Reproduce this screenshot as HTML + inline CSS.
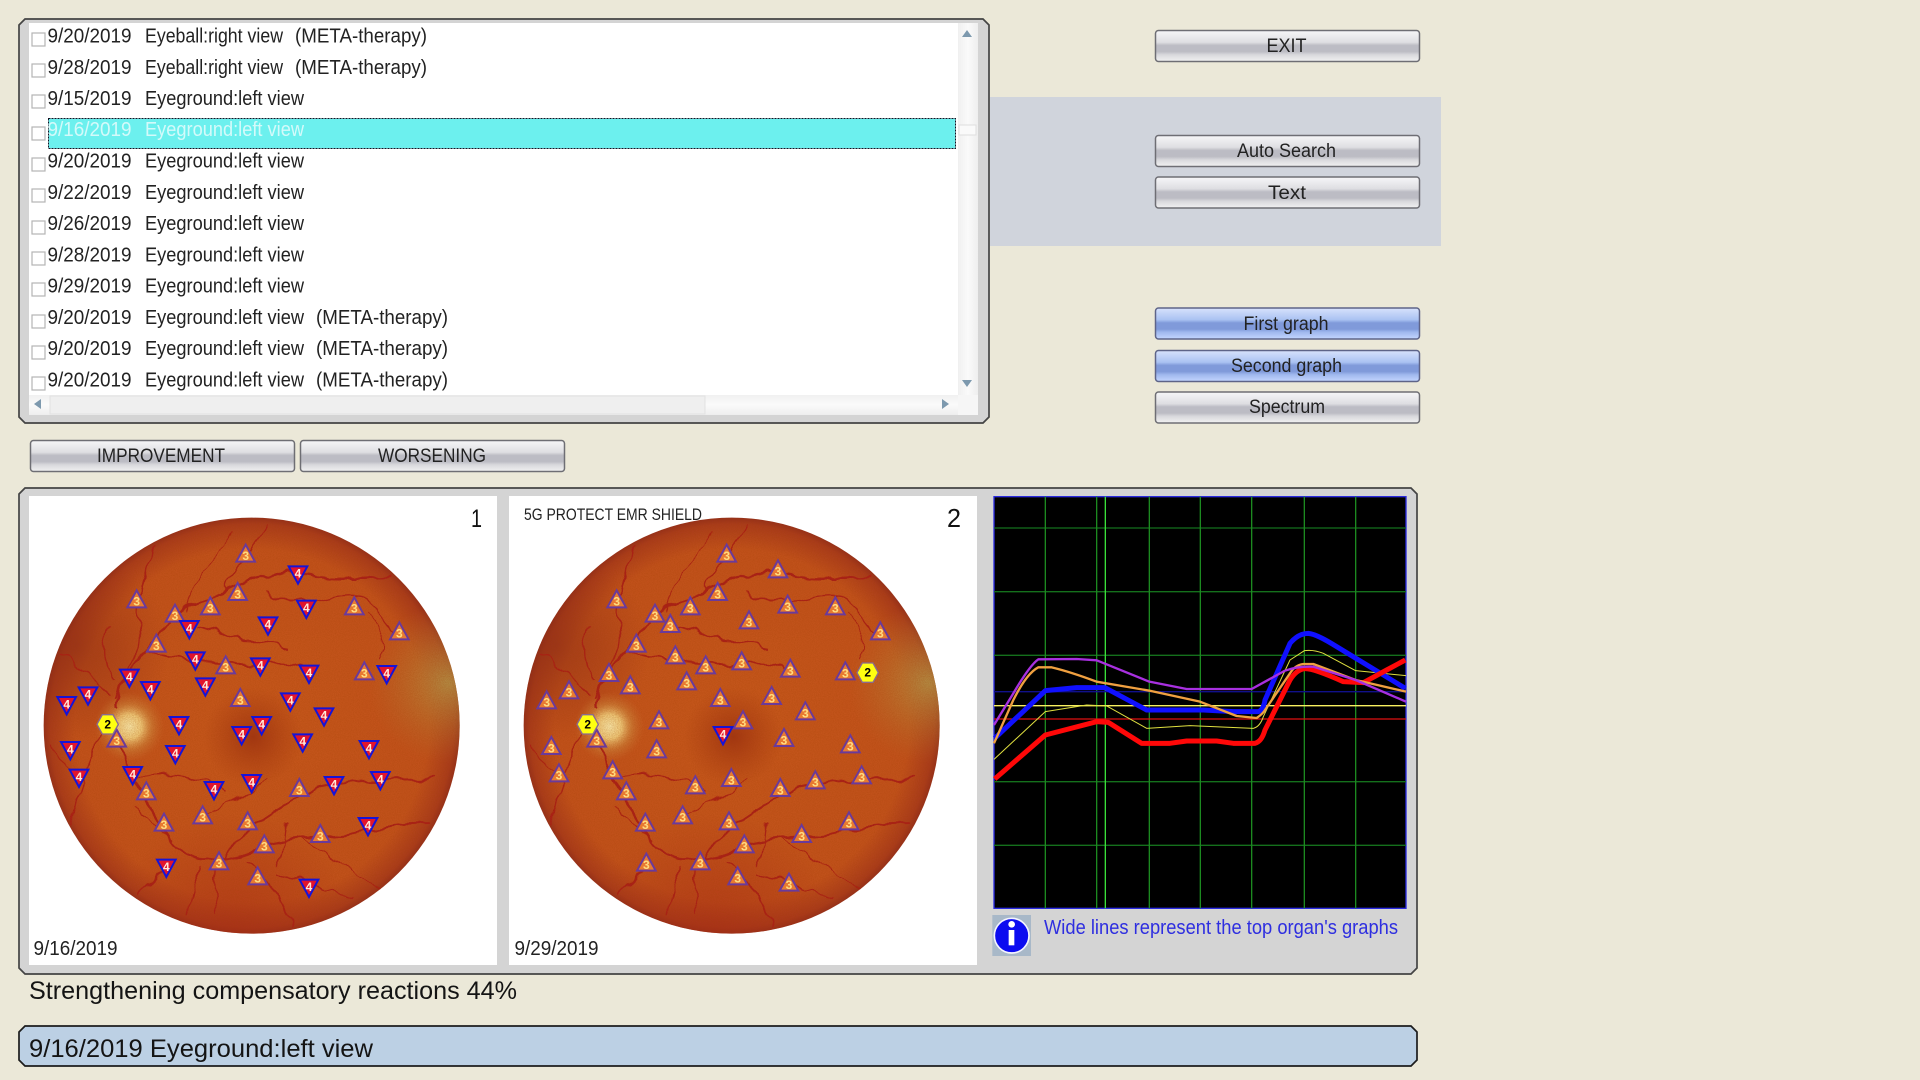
<!DOCTYPE html>
<html><head><meta charset="utf-8"><title>Eyeground view</title>
<style>
html,body{margin:0;padding:0;background:#ebe8d8;width:1920px;height:1080px;overflow:hidden}
svg{display:block;position:absolute;left:0;top:0}
text{font-family:"Liberation Sans",sans-serif;fill:#222}
.r{font-size:20px}
.b{font-size:19px;fill:#1c1c24}
.m text{font-weight:bold;font-size:36px;text-anchor:middle;dominant-baseline:central}
.u text{fill:#ffdc80}.d text{fill:#ffe8d8}
.h text{fill:#000}
</style></head><body>
<svg width="1920" height="1080" viewBox="0 0 1920 1080" xmlns="http://www.w3.org/2000/svg">
<defs>
<linearGradient id="gb" x1="0" y1="0" x2="0" y2="1"><stop offset="0" stop-color="#f6f6f8"/><stop offset=".38" stop-color="#dedee2"/><stop offset=".48" stop-color="#bcbcc4"/><stop offset=".68" stop-color="#bcbcc4"/><stop offset=".78" stop-color="#d8d8dc"/><stop offset="1" stop-color="#f2f2f2"/></linearGradient>
<linearGradient id="gl" x1="0" y1="0" x2="0" y2="1"><stop offset="0" stop-color="#d8e2fc"/><stop offset=".38" stop-color="#aac2f2"/><stop offset=".48" stop-color="#809ada"/><stop offset=".68" stop-color="#809ada"/><stop offset=".78" stop-color="#a0b8ee"/><stop offset="1" stop-color="#c4d6ff"/></linearGradient>
<linearGradient id="sv" x1="0" y1="0" x2="1" y2="0"><stop offset="0" stop-color="#f0f0f0"/><stop offset=".5" stop-color="#fafafa"/><stop offset="1" stop-color="#eeeeee"/></linearGradient>
<linearGradient id="sh" x1="0" y1="0" x2="0" y2="1"><stop offset="0" stop-color="#f0f0f0"/><stop offset=".5" stop-color="#fafafa"/><stop offset="1" stop-color="#eeeeee"/></linearGradient>
<radialGradient id="f0" cx=".5" cy=".5" r=".5"><stop offset="0" stop-color="#c6581c"/><stop offset=".85" stop-color="#c2521c"/><stop offset=".97" stop-color="#aa3c1c"/><stop offset="1" stop-color="#96301c"/></radialGradient>
<radialGradient id="f1" gradientUnits="userSpaceOnUse" cx="1345" cy="610" r="240"><stop offset="0" stop-color="#b49448" stop-opacity=".9"/><stop offset=".5" stop-color="#b88238" stop-opacity=".45"/><stop offset="1" stop-color="#b87030" stop-opacity="0"/></radialGradient>
<radialGradient id="f2" gradientUnits="userSpaceOnUse" cx="388" cy="740" r="105"><stop offset="0" stop-color="#f8e8a8"/><stop offset=".35" stop-color="#eec878"/><stop offset=".65" stop-color="#d08a40" stop-opacity=".6"/><stop offset="1" stop-color="#c87030" stop-opacity="0"/></radialGradient>
<radialGradient id="f3" gradientUnits="userSpaceOnUse" cx="760" cy="770" r="150"><stop offset="0" stop-color="#962a10" stop-opacity=".75"/><stop offset="1" stop-color="#a03410" stop-opacity="0"/></radialGradient>
<radialGradient id="f4" gradientUnits="userSpaceOnUse" cx="230" cy="500" r="280"><stop offset="0" stop-color="#8a2a18" stop-opacity=".55"/><stop offset="1" stop-color="#8a2a18" stop-opacity="0"/></radialGradient>
<radialGradient id="f5" gradientUnits="userSpaceOnUse" cx="700" cy="1360" r="360"><stop offset="0" stop-color="#a82c18" stop-opacity=".6"/><stop offset="1" stop-color="#a82c18" stop-opacity="0"/></radialGradient>
<filter id="n" x="0" y="0" width="100%" height="100%"><feTurbulence type="fractalNoise" baseFrequency=".35" numOctaves="2" seed="4"/><feColorMatrix values="0 0 0 0 .35  0 0 0 0 .05  0 0 0 0 0  .9 0 0 0 -.25"/></filter>
<filter id="w" x="-5%" y="-5%" width="110%" height="110%"><feTurbulence type="fractalNoise" baseFrequency=".018" numOctaves="2" seed="7" result="t"/><feDisplacementMap in="SourceGraphic" in2="t" scale="34" xChannelSelector="R" yChannelSelector="G"/></filter>
<clipPath id="cc"><circle cx="755" cy="737" r="624"/></clipPath>
<g id="fundus">
<circle cx="755" cy="737" r="624" fill="url(#f0)"/>
<g clip-path="url(#cc)">
<rect x="130" y="110" width="1260" height="1260" fill="url(#f1)"/>
<rect x="130" y="110" width="1260" height="1260" fill="url(#f4)"/>
<rect x="130" y="110" width="1260" height="1260" fill="url(#f5)"/>
<rect x="130" y="110" width="1260" height="1260" fill="url(#f3)"/>
<rect x="130" y="110" width="1260" height="1260" fill="url(#f2)"/>
<rect x="130" y="110" width="1260" height="1260" filter="url(#n)" opacity=".6"/>
<g fill="none" stroke="#a82212" stroke-linecap="round" filter="url(#w)">
<path stroke-width="7" d="M350 690C345 640 370 590 440 510S500 430 540 395S620 365 700 325S800 285 860 280S930 295 1020 295S1100 295 1170 290"/>
<path stroke-width="7" d="M360 790C380 880 430 950 500 1060S620 1140 680 1135S800 1080 950 1075S1100 1030 1290 1030"/>
<path stroke-width="6" d="M680 1135C720 1050 820 1000 900 950S1060 905 1300 895"/>
<path stroke-width="5" d="M470 200C430 270 415 320 415 400S430 500 380 570L345 650"/>
<path stroke-width="5" d="M590 440C660 450 700 470 720 480S800 470 860 500"/>
<path stroke-width="5" d="M445 520C560 540 650 560 800 550S900 590 930 590"/>
<path stroke-width="4" d="M800 330C810 370 830 380 1000 350S1100 410 1200 470"/>
<path stroke-width="5" d="M500 1160C470 1190 440 1220 420 1240"/>
<path stroke-width="4" d="M600 1160C580 1220 570 1260 560 1310"/>
<path stroke-width="4" d="M650 1150C640 1200 650 1240 650 1290"/>
<path stroke-width="5" d="M740 1150C790 1180 840 1250 880 1340"/>
<path stroke-width="4" d="M830 1190C900 1200 970 1220 1060 1250"/>
<path stroke-width="4" d="M330 640C290 600 240 570 180 520"/>
<path stroke-width="4" d="M300 760C270 830 240 950 210 1030"/>
<path stroke-width="4" d="M410 890C480 880 600 885 680 930"/>
<path stroke-width="4" d="M340 600C300 540 310 480 330 440"/>
<path stroke-width="4" d="M860 1020C850 1060 860 1100 830 1160"/>
<path stroke-width="4" d="M800 130C780 200 690 260 680 330"/>
<path stroke-width="3" d="M410 980C440 1020 470 1040 520 1080"/>
<path stroke-width="3" d="M620 1000C680 980 720 950 800 900"/>
<path stroke-width="3" d="M900 1075C1000 1130 1080 1180 1140 1230"/>
<path stroke-width="3" d="M1100 400C1140 440 1160 480 1140 540"/>
<path stroke-width="3" d="M560 390C580 300 640 220 700 160"/>
<path stroke-width="3" d="M240 880C200 860 170 830 150 800"/>
</g></g></g>
<g id="u"><polygon points="0,-34 28,17 -28,17" fill="#e87a30" stroke="#6a3a9a" stroke-width="6"/></g>
<g id="d"><polygon points="-28,-22 28,-22 0,30" fill="#e2142c" stroke="#1414d8" stroke-width="6"/></g>
<g id="h"><polygon points="-32,0 -16,-29 16,-29 32,0 16,29 -16,29" fill="#ffff10" stroke="#8a6a90" stroke-width="4"/></g>
</defs>

<rect width="1920" height="1080" fill="#ebe8d8"/>

<!-- top list panel -->
<rect x="990" y="97" width="451" height="149" fill="#d0d4dc"/>
<polygon points="25,19 983,19 989,25 989,417 983,423 25,423 19,417 19,25" fill="#d4d4d4" stroke="#444" stroke-width="1.700"/>
<rect x="29" y="23" width="929" height="372" fill="#fff"/>
<rect x="958" y="23" width="20" height="392" fill="url(#sv)"/>
<rect x="29" y="395" width="929" height="20" fill="url(#sh)"/>
<rect x="958" y="395" width="20" height="20" fill="#f6f6f6"/>
<rect x="50" y="396" width="655" height="18" fill="#efefef" stroke="#e2e2e2"/>
<rect x="959" y="125" width="17" height="10" fill="#fafafa" stroke="#dedede"/>
<polygon points="967,30 972,37 962,37" fill="#7d99ae"/>
<polygon points="967,387 972,380 962,380" fill="#7d99ae"/>
<polygon points="34,404 41,399 41,409" fill="#7d99ae"/>
<polygon points="949,404 942,399 942,409" fill="#7d99ae"/>

<rect x="48.500" y="118.500" width="907" height="30" fill="#6cf0ee" stroke="#112" stroke-dasharray="2 1"/>

<g fill="#fff" stroke="#b4b4b4" stroke-width="1.200">
<rect x="32" y="33" width="13" height="13"/><rect x="32" y="64" width="13" height="13"/><rect x="32" y="95" width="13" height="13"/><rect x="32" y="127" width="13" height="13"/><rect x="32" y="158" width="13" height="13"/><rect x="32" y="189" width="13" height="13"/><rect x="32" y="221" width="13" height="13"/><rect x="32" y="252" width="13" height="13"/><rect x="32" y="283" width="13" height="13"/><rect x="32" y="315" width="13" height="13"/><rect x="32" y="346" width="13" height="13"/><rect x="32" y="377" width="13" height="13"/>
</g>
<g class="r">
<text x="47.500" y="42.500" textLength="84" lengthAdjust="spacingAndGlyphs">9/20/2019</text><text x="145" y="42.500" textLength="138" lengthAdjust="spacingAndGlyphs">Eyeball:right view</text><text x="295" y="42.500" textLength="132" lengthAdjust="spacingAndGlyphs">(META-therapy)</text>
<text x="47.500" y="73.800" textLength="84" lengthAdjust="spacingAndGlyphs">9/28/2019</text><text x="145" y="73.800" textLength="138" lengthAdjust="spacingAndGlyphs">Eyeball:right view</text><text x="295" y="73.800" textLength="132" lengthAdjust="spacingAndGlyphs">(META-therapy)</text>
<text x="47.500" y="105" textLength="84" lengthAdjust="spacingAndGlyphs">9/15/2019</text><text x="145" y="105" textLength="159" lengthAdjust="spacingAndGlyphs">Eyeground:left view</text>
<text x="47.500" y="136" textLength="84" lengthAdjust="spacingAndGlyphs" style="fill:#d4fafa">9/16/2019</text><text x="145" y="136" textLength="159" lengthAdjust="spacingAndGlyphs" style="fill:#d4fafa">Eyeground:left view</text>
<text x="47.500" y="167.500" textLength="84" lengthAdjust="spacingAndGlyphs">9/20/2019</text><text x="145" y="167.500" textLength="159" lengthAdjust="spacingAndGlyphs">Eyeground:left view</text>
<text x="47.500" y="198.800" textLength="84" lengthAdjust="spacingAndGlyphs">9/22/2019</text><text x="145" y="198.800" textLength="159" lengthAdjust="spacingAndGlyphs">Eyeground:left view</text>
<text x="47.500" y="230" textLength="84" lengthAdjust="spacingAndGlyphs">9/26/2019</text><text x="145" y="230" textLength="159" lengthAdjust="spacingAndGlyphs">Eyeground:left view</text>
<text x="47.500" y="261.300" textLength="84" lengthAdjust="spacingAndGlyphs">9/28/2019</text><text x="145" y="261.300" textLength="159" lengthAdjust="spacingAndGlyphs">Eyeground:left view</text>
<text x="47.500" y="292.600" textLength="84" lengthAdjust="spacingAndGlyphs">9/29/2019</text><text x="145" y="292.600" textLength="159" lengthAdjust="spacingAndGlyphs">Eyeground:left view</text>
<text x="47.500" y="324" textLength="84" lengthAdjust="spacingAndGlyphs">9/20/2019</text><text x="145" y="324" textLength="159" lengthAdjust="spacingAndGlyphs">Eyeground:left view</text><text x="316" y="324" textLength="132" lengthAdjust="spacingAndGlyphs">(META-therapy)</text>
<text x="47.500" y="355.200" textLength="84" lengthAdjust="spacingAndGlyphs">9/20/2019</text><text x="145" y="355.200" textLength="159" lengthAdjust="spacingAndGlyphs">Eyeground:left view</text><text x="316" y="355.200" textLength="132" lengthAdjust="spacingAndGlyphs">(META-therapy)</text>
<text x="47.500" y="386.500" textLength="84" lengthAdjust="spacingAndGlyphs">9/20/2019</text><text x="145" y="386.500" textLength="159" lengthAdjust="spacingAndGlyphs">Eyeground:left view</text><text x="316" y="386.500" textLength="132" lengthAdjust="spacingAndGlyphs">(META-therapy)</text>
</g>

<!-- buttons -->
<g stroke="#6e6e74" stroke-width="1.500">
<rect x="1155.500" y="30.500" width="264" height="31" rx="3" fill="url(#gb)"/>
<rect x="1155.500" y="135.500" width="264" height="31" rx="3" fill="url(#gb)"/>
<rect x="1155.500" y="177" width="264" height="31" rx="3" fill="url(#gb)"/>
<rect x="1155.500" y="308" width="264" height="31" rx="3" fill="url(#gl)" stroke="#5e6488"/>
<rect x="1155.500" y="350.500" width="264" height="31" rx="3" fill="url(#gl)" stroke="#5e6488"/>
<rect x="1155.500" y="392" width="264" height="31" rx="3" fill="url(#gb)"/>
<rect x="30.500" y="440.500" width="264" height="31" rx="3" fill="url(#gb)"/>
<rect x="300.500" y="440.500" width="264" height="31" rx="3" fill="url(#gb)"/>
</g>
<g class="b">
<text x="1266.500" y="52" textLength="40" lengthAdjust="spacingAndGlyphs">EXIT</text>
<text x="1237" y="157" textLength="99" lengthAdjust="spacingAndGlyphs">Auto Search</text>
<text x="1268" y="199" textLength="38" lengthAdjust="spacingAndGlyphs">Text</text>
<text x="1243.500" y="330" textLength="85" lengthAdjust="spacingAndGlyphs">First graph</text>
<text x="1231" y="372" textLength="111" lengthAdjust="spacingAndGlyphs">Second graph</text>
<text x="1249" y="413" textLength="76" lengthAdjust="spacingAndGlyphs">Spectrum</text>
<text x="97" y="462" textLength="128" lengthAdjust="spacingAndGlyphs">IMPROVEMENT</text>
<text x="378" y="462" textLength="108" lengthAdjust="spacingAndGlyphs">WORSENING</text>
</g>

<!-- main panel -->
<polygon points="25,488 1411,488 1417,494 1417,968 1411,974 25,974 19,968 19,494" fill="#d4d4d4" stroke="#444" stroke-width="1.700"/>
<rect x="29" y="496" width="468" height="469" fill="#fff"/>
<rect x="509" y="496" width="468" height="469" fill="#fff"/>

<g transform="translate(0 480) scale(.33333)"><use href="#fundus"/></g>
<g transform="translate(480 480) scale(.33333)"><use href="#fundus"/></g>

<text x="471" y="527" style="font-size:25px;fill:#111" textLength="11" lengthAdjust="spacingAndGlyphs">1</text>
<text x="947" y="527" style="font-size:26px;fill:#111" textLength="14" lengthAdjust="spacingAndGlyphs">2</text>
<text x="524" y="520" style="font-size:17px;fill:#222" textLength="178" lengthAdjust="spacingAndGlyphs">5G PROTECT EMR SHIELD</text>
<text x="33.500" y="955" class="r" textLength="84" lengthAdjust="spacingAndGlyphs">9/16/2019</text>
<text x="514.500" y="955" class="r" textLength="84" lengthAdjust="spacingAndGlyphs">9/29/2019</text>

<!-- markers panel 1 -->
<g class="m" transform="translate(0 481) scale(.33333)">
<g class="u">
<g transform="translate(737 225)"><use href="#u"/><text>3</text></g>
<g transform="translate(713 340)"><use href="#u"/><text>3</text></g>
<g transform="translate(410 362)"><use href="#u"/><text>3</text></g>
<g transform="translate(525 405)"><use href="#u"/><text>3</text></g>
<g transform="translate(631 383)"><use href="#u"/><text>3</text></g>
<g transform="translate(1063 383)"><use href="#u"/><text>3</text></g>
<g transform="translate(469 495)"><use href="#u"/><text>3</text></g>
<g transform="translate(1198 458)"><use href="#u"/><text>3</text></g>
<g transform="translate(677 560)"><use href="#u"/><text>3</text></g>
<g transform="translate(1093 578)"><use href="#u"/><text>3</text></g>
<g transform="translate(721 658)"><use href="#u"/><text>3</text></g>
<g transform="translate(439 938)"><use href="#u"/><text>3</text></g>
<g transform="translate(898 928)"><use href="#u"/><text>3</text></g>
<g transform="translate(608 1010)"><use href="#u"/><text>3</text></g>
<g transform="translate(492 1032)"><use href="#u"/><text>3</text></g>
<g transform="translate(743 1028)"><use href="#u"/><text>3</text></g>
<g transform="translate(961 1066)"><use href="#u"/><text>3</text></g>
<g transform="translate(793 1097)"><use href="#u"/><text>3</text></g>
<g transform="translate(657 1148)"><use href="#u"/><text>3</text></g>
<g transform="translate(773 1193)"><use href="#u"/><text>3</text></g>
<g transform="translate(350 780)"><use href="#u"/><text>3</text></g>
</g>
<g class="h"><g transform="translate(323 730)"><use href="#h"/><text>2</text></g></g>
<g class="d">
<g transform="translate(894 278)"><use href="#d"/><text>4</text></g>
<g transform="translate(919 381)"><use href="#d"/><text>4</text></g>
<g transform="translate(568 442)"><use href="#d"/><text>4</text></g>
<g transform="translate(804 431)"><use href="#d"/><text>4</text></g>
<g transform="translate(586 536)"><use href="#d"/><text>4</text></g>
<g transform="translate(781 554)"><use href="#d"/><text>4</text></g>
<g transform="translate(927 576)"><use href="#d"/><text>4</text></g>
<g transform="translate(1160 577)"><use href="#d"/><text>4</text></g>
<g transform="translate(388 588)"><use href="#d"/><text>4</text></g>
<g transform="translate(451 625)"><use href="#d"/><text>4</text></g>
<g transform="translate(616 614)"><use href="#d"/><text>4</text></g>
<g transform="translate(264 641)"><use href="#d"/><text>4</text></g>
<g transform="translate(200 670)"><use href="#d"/><text>4</text></g>
<g transform="translate(871 659)"><use href="#d"/><text>4</text></g>
<g transform="translate(972 704)"><use href="#d"/><text>4</text></g>
<g transform="translate(537 730)"><use href="#d"/><text>4</text></g>
<g transform="translate(785 730)"><use href="#d"/><text>4</text></g>
<g transform="translate(725 760)"><use href="#d"/><text>4</text></g>
<g transform="translate(908 782)"><use href="#d"/><text>4</text></g>
<g transform="translate(1107 802)"><use href="#d"/><text>4</text></g>
<g transform="translate(211 805)"><use href="#d"/><text>4</text></g>
<g transform="translate(526 817)"><use href="#d"/><text>4</text></g>
<g transform="translate(237 888)"><use href="#d"/><text>4</text></g>
<g transform="translate(398 880)"><use href="#d"/><text>4</text></g>
<g transform="translate(755 904)"><use href="#d"/><text>4</text></g>
<g transform="translate(642 925)"><use href="#d"/><text>4</text></g>
<g transform="translate(1002 910)"><use href="#d"/><text>4</text></g>
<g transform="translate(1141 895)"><use href="#d"/><text>4</text></g>
<g transform="translate(1104 1033)"><use href="#d"/><text>4</text></g>
<g transform="translate(499 1158)"><use href="#d"/><text>4</text></g>
<g transform="translate(927 1218)"><use href="#d"/><text>4</text></g>
</g>
</g>

<!-- markers panel 2 -->
<g class="m" transform="translate(480 481) scale(.33333)">
<g class="u">
<g transform="translate(740 225)"><use href="#u"/><text>3</text></g>
<g transform="translate(894 272)"><use href="#u"/><text>3</text></g>
<g transform="translate(713 340)"><use href="#u"/><text>3</text></g>
<g transform="translate(410 362)"><use href="#u"/><text>3</text></g>
<g transform="translate(525 405)"><use href="#u"/><text>3</text></g>
<g transform="translate(631 383)"><use href="#u"/><text>3</text></g>
<g transform="translate(571 436)"><use href="#u"/><text>3</text></g>
<g transform="translate(807 425)"><use href="#u"/><text>3</text></g>
<g transform="translate(923 378)"><use href="#u"/><text>3</text></g>
<g transform="translate(1066 383)"><use href="#u"/><text>3</text></g>
<g transform="translate(1201 458)"><use href="#u"/><text>3</text></g>
<g transform="translate(469 495)"><use href="#u"/><text>3</text></g>
<g transform="translate(586 530)"><use href="#u"/><text>3</text></g>
<g transform="translate(677 560)"><use href="#u"/><text>3</text></g>
<g transform="translate(785 548)"><use href="#u"/><text>3</text></g>
<g transform="translate(931 570)"><use href="#u"/><text>3</text></g>
<g transform="translate(1096 578)"><use href="#u"/><text>3</text></g>
<g transform="translate(387 583)"><use href="#u"/><text>3</text></g>
<g transform="translate(451 620)"><use href="#u"/><text>3</text></g>
<g transform="translate(620 608)"><use href="#u"/><text>3</text></g>
<g transform="translate(267 635)"><use href="#u"/><text>3</text></g>
<g transform="translate(200 665)"><use href="#u"/><text>3</text></g>
<g transform="translate(721 658)"><use href="#u"/><text>3</text></g>
<g transform="translate(875 652)"><use href="#u"/><text>3</text></g>
<g transform="translate(976 698)"><use href="#u"/><text>3</text></g>
<g transform="translate(537 725)"><use href="#u"/><text>3</text></g>
<g transform="translate(789 725)"><use href="#u"/><text>3</text></g>
<g transform="translate(912 778)"><use href="#u"/><text>3</text></g>
<g transform="translate(1111 797)"><use href="#u"/><text>3</text></g>
<g transform="translate(530 812)"><use href="#u"/><text>3</text></g>
<g transform="translate(214 802)"><use href="#u"/><text>3</text></g>
<g transform="translate(237 884)"><use href="#u"/><text>3</text></g>
<g transform="translate(398 875)"><use href="#u"/><text>3</text></g>
<g transform="translate(754 898)"><use href="#u"/><text>3</text></g>
<g transform="translate(646 920)"><use href="#u"/><text>3</text></g>
<g transform="translate(901 928)"><use href="#u"/><text>3</text></g>
<g transform="translate(1006 905)"><use href="#u"/><text>3</text></g>
<g transform="translate(1145 890)"><use href="#u"/><text>3</text></g>
<g transform="translate(439 938)"><use href="#u"/><text>3</text></g>
<g transform="translate(608 1010)"><use href="#u"/><text>3</text></g>
<g transform="translate(496 1032)"><use href="#u"/><text>3</text></g>
<g transform="translate(747 1028)"><use href="#u"/><text>3</text></g>
<g transform="translate(1107 1028)"><use href="#u"/><text>3</text></g>
<g transform="translate(965 1066)"><use href="#u"/><text>3</text></g>
<g transform="translate(793 1097)"><use href="#u"/><text>3</text></g>
<g transform="translate(661 1148)"><use href="#u"/><text>3</text></g>
<g transform="translate(499 1152)"><use href="#u"/><text>3</text></g>
<g transform="translate(773 1193)"><use href="#u"/><text>3</text></g>
<g transform="translate(927 1212)"><use href="#u"/><text>3</text></g>
<g transform="translate(350 780)"><use href="#u"/><text>3</text></g>
</g>
<g class="h"><g transform="translate(323 730)"><use href="#h"/><text>2</text></g><g transform="translate(1163 575)"><use href="#h"/><text>2</text></g></g>
<g class="d"><g transform="translate(729 760)"><use href="#d"/><text>4</text></g></g>
</g>

<!-- graph -->
<g transform="translate(970 480) scale(.33333)">
<rect x="72" y="50" width="1236" height="1235" fill="#000" stroke="#2a2ae0" stroke-width="4"/>
<g stroke="#14701c" stroke-width="4" fill="none">
<path d="M72 144H1308M72 335H1308M72 526H1308M72 905H1308M72 1096H1308"/>
<path stroke="#1c8a20" d="M226 50V1285M380 50V1285M538 50V1285M691 50V1285M845 50V1285M1003 50V1285M1157 50V1285"/>
</g>
<path d="M406 50V1285" stroke="#3ae03a" stroke-width="4"/>
<path d="M72 635H1308" stroke="#10108a" stroke-width="4"/>
<path d="M72 677H1308" stroke="#f8f060" stroke-width="4"/>
<path d="M72 717H1308" stroke="#e01010" stroke-width="4"/>
<g fill="none" stroke-linejoin="round">
<path stroke="#e0e040" stroke-width="3" d="M72 838L226 695L350 675L410 678L530 745L660 737L850 745Q870 740 880 710L960 540L1003 512Q1030 508 1060 520L1157 572L1308 587"/>
<path stroke="#1010ff" stroke-width="15" d="M74 775L226 632L320 623L405 623L530 690L700 690L790 695L865 695Q880 690 885 660L960 490Q985 460 1015 460Q1040 462 1100 500L1306 625"/>
<path stroke="#ff0808" stroke-width="15" d="M74 897L226 765L380 725L415 727L515 790L600 790L650 783L740 783L790 790L855 790Q875 785 885 750L960 600Q980 568 1005 566Q1030 565 1120 605L1180 608L1250 570L1306 540"/>
<path stroke="#f0a040" stroke-width="7" d="M72 790L130 660Q170 580 205 562L245 562Q300 575 380 605L538 632L690 665L800 708L860 714Q880 700 885 690L960 580Q975 555 1000 552L1030 552L1157 600L1308 635"/>
<path stroke="#a830e0" stroke-width="7" d="M72 735L130 640Q180 555 205 538L320 537L380 541L538 605L650 627L845 627L945 572Q985 558 1030 560L1157 600L1308 665"/>
</g>
<rect x="67" y="1305" width="116" height="123" fill="#a8b8c8"/>
<circle cx="125" cy="1367" r="52" fill="#0c0cf0" stroke="#f4f4ff" stroke-width="5"/>
<rect x="116" y="1350" width="17" height="46" fill="#fff"/>
<circle cx="125" cy="1333" r="10" fill="#fff"/>
</g>
<text x="1044" y="934" style="font-size:20px;fill:#2e2ee0" textLength="354" lengthAdjust="spacingAndGlyphs">Wide lines represent the top organ's graphs</text>

<text x="29" y="999" style="font-size:25px;fill:#141414" textLength="488" lengthAdjust="spacingAndGlyphs">Strengthening compensatory reactions 44%</text>

<polygon points="25,1026 1411,1026 1417,1032 1417,1060 1411,1066 25,1066 19,1060 19,1032" fill="#bcd0e4" stroke="#1c1c1c" stroke-width="1.700"/>
<text x="29" y="1057" style="font-size:25px;fill:#141414" textLength="344" lengthAdjust="spacingAndGlyphs">9/16/2019 Eyeground:left view</text>
</svg>
</body></html>
